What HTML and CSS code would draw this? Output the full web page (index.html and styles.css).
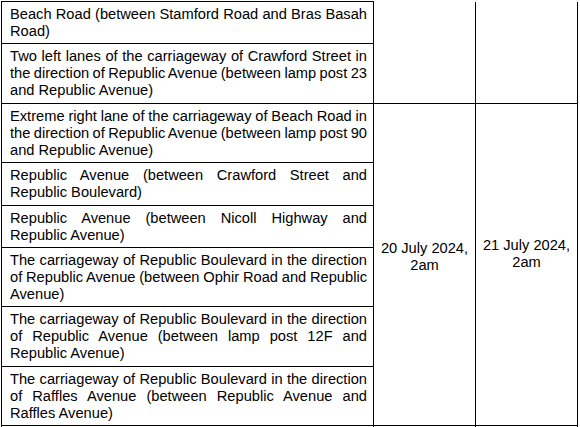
FILE: index.html
```html
<!DOCTYPE html>
<html>
<head>
<meta charset="utf-8">
<link rel="stylesheet" href="styles.css">
</head>
<body>
<div class="frame">
<table class="closures">
  <colgroup>
    <col class="c-loc">
    <col class="c-date">
    <col class="c-date">
  </colgroup>
  <tr>
    <td class="loc first">Beach Road (between Stamford Road and Bras Basah <span class="tail">Road)</span></td>
    <td class="date cont" rowspan="2"></td>
    <td class="date cont" rowspan="2"></td>
  </tr>
  <tr>
    <td class="loc">Two left lanes of the carriageway of Crawford Street in the direction of Republic Avenue (between lamp post 23 <span class="tail">and Republic Avenue)</span></td>
  </tr>
  <tr>
    <td class="loc">Extreme right lane of the carriageway of Beach Road in the direction of Republic Avenue (between lamp post 90 <span class="tail">and Republic Avenue)</span></td>
    <td class="date start" rowspan="6">20 July 2024,<br>2am</td>
    <td class="date end" rowspan="6">21 July 2024,<br>2am</td>
  </tr>
  <tr>
    <td class="loc">Republic Avenue (between Crawford Street and <span class="tail">Republic Boulevard)</span></td>
  </tr>
  <tr>
    <td class="loc">Republic Avenue (between Nicoll Highway and <span class="tail">Republic Avenue)</span></td>
  </tr>
  <tr>
    <td class="loc">The carriageway of Republic Boulevard in the direction of Republic Avenue (between Ophir Road and Republic <span class="tail">Avenue)</span></td>
  </tr>
  <tr>
    <td class="loc">The carriageway of Republic Boulevard in the direction of Republic Avenue (between lamp post 12F and <span class="tail">Republic Avenue)</span></td>
  </tr>
  <tr>
    <td class="loc">The carriageway of Republic Boulevard in the direction of Raffles Avenue (between Republic Avenue and <span class="tail">Raffles Avenue)</span></td>
  </tr>
  <tr class="next">
    <td class="loc">&nbsp;</td>
    <td class="date"></td>
    <td class="date"></td>
  </tr>
</table>
</div>
</body>
</html>
```

FILE: styles.css
```css
html, body {
  margin: 0;
  padding: 0;
  background: #fff;
}
body {
  width: 580px;
  height: 427px;
  overflow: hidden;
}
.frame {
  padding: 1px 0 0 1px;
}
.closures {
  border-collapse: collapse;
  table-layout: fixed;
  width: 577px;
  font-family: "Liberation Sans", Arial, sans-serif;
  font-size: 14.67px;
  line-height: 17px;
  color: #000;
}
.c-loc { width: 372px; }
.c-date { width: 102px; }
.closures td {
  border: 1px solid #000;
  padding: 4px 6px 3.4px 8px;
}
.closures td.loc {
  text-align: justify;
  word-spacing: -1px;
  vertical-align: top;
}
.closures td.loc .tail {
  word-spacing: normal;
}
.closures td.date {
  text-align: center;
  vertical-align: middle;
  padding: 3px 4px 4px 4px;
}
.closures td.cont {
  border-top: none;
}
.closures td.start {
  padding-bottom: 18px;
}
.closures td.end {
  padding-bottom: 24px;
}
.closures .next td {
  height: 40px;
}
```
